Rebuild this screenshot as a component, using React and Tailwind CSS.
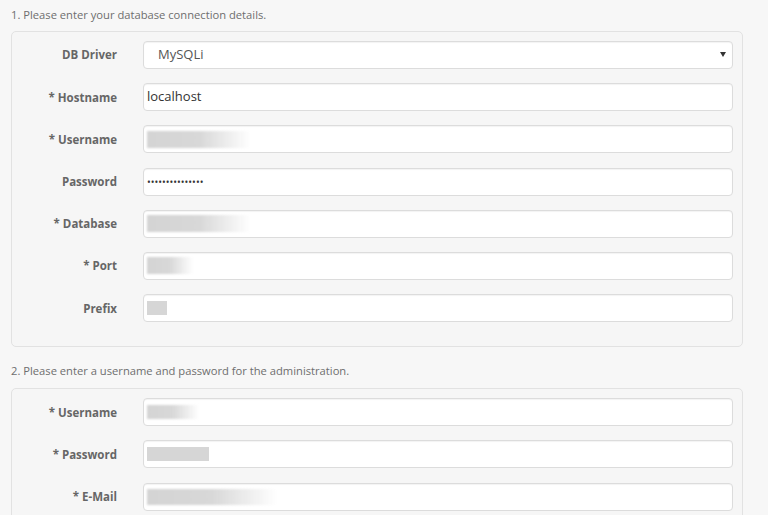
import React from 'react';

const Blur = ({ w, h = 16, sharp }) => (
  <div
    className={sharp ? 'bg-[#d6d6d6] blur-[0.5px]' : 'bg-gradient-to-r from-[#d4d4d4] via-[#d8d8d8] to-transparent blur-[1px]'}
    style={{ width: w, height: h }}
  />
);

const Field = ({ label, children, select }) => (
  <div className="flex items-center h-[28px]">
    <label className="w-[105px] text-right text-[11.5px] font-bold text-[#666]">
      {label}
    </label>
    <div className="ml-[26px] flex-1 h-full relative flex items-center bg-white border border-[#dcdcdc] rounded-[4px] shadow-[inset_0_1px_1px_rgba(0,0,0,0.05)] px-[3px]">
      {children}
      {select && (
        <span className="absolute right-[6px] top-[10px] w-0 h-0 border-l-[3.5px] border-r-[3.5px] border-t-[5px] border-l-transparent border-r-transparent border-t-[#333]" />
      )}
    </div>
  </div>
);

export default function App() {
  return (
    <div
      className="w-full h-[515px] overflow-hidden bg-[#f7f7f7] pl-[11px] pr-[25px]"
      style={{ fontFamily: '"Open Sans", "Liberation Sans", sans-serif' }}
    >
      <p className="text-[11.2px] leading-[15px] pt-[7px] mb-[9px] text-[#6e6e6e]">
        1. Please enter your database connection details.
      </p>
      <div className="pb-[24px] border border-[#e2e2e2] rounded-[5px] bg-[#f6f6f6]">
        <div className="pt-[9px] pr-[9px] flex flex-col gap-[14.2px]">
          <Field label="DB Driver" select>
            <span className="pl-[11px] text-[13px] text-[#555]">MySQLi</span>
          </Field>
          <Field label="* Hostname">
            <span className="text-[13px] text-[#333]">localhost</span>
          </Field>
          <Field label="* Username">
            <Blur w={104} h={17} />
          </Field>
          <Field label="Password">
            <span className="text-[10px] text-[#333] leading-none">•••••••••••••••</span>
          </Field>
          <Field label="* Database">
            <Blur w={104} h={17} />
          </Field>
          <Field label="* Port">
            <Blur w={46} h={17} />
          </Field>
          <Field label="Prefix">
            <Blur w={20} h={14} sharp />
          </Field>
        </div>
      </div>
      <p className="text-[11.2px] leading-[15px] mt-[16px] mb-[10px] text-[#6e6e6e]">
        2. Please enter a username and password for the administration.
      </p>
      <div className="pb-[23px] border border-[#e2e2e2] rounded-[5px] bg-[#f6f6f6]">
        <div className="pt-[9px] pr-[9px] flex flex-col gap-[14.2px]">
          <Field label="* Username">
            <Blur w={52} h={14} />
          </Field>
          <Field label="* Password">
            <Blur w={62} h={14} sharp />
          </Field>
          <Field label="* E-Mail">
            <Blur w={130} h={16} />
          </Field>
        </div>
      </div>
    </div>
  );
}
